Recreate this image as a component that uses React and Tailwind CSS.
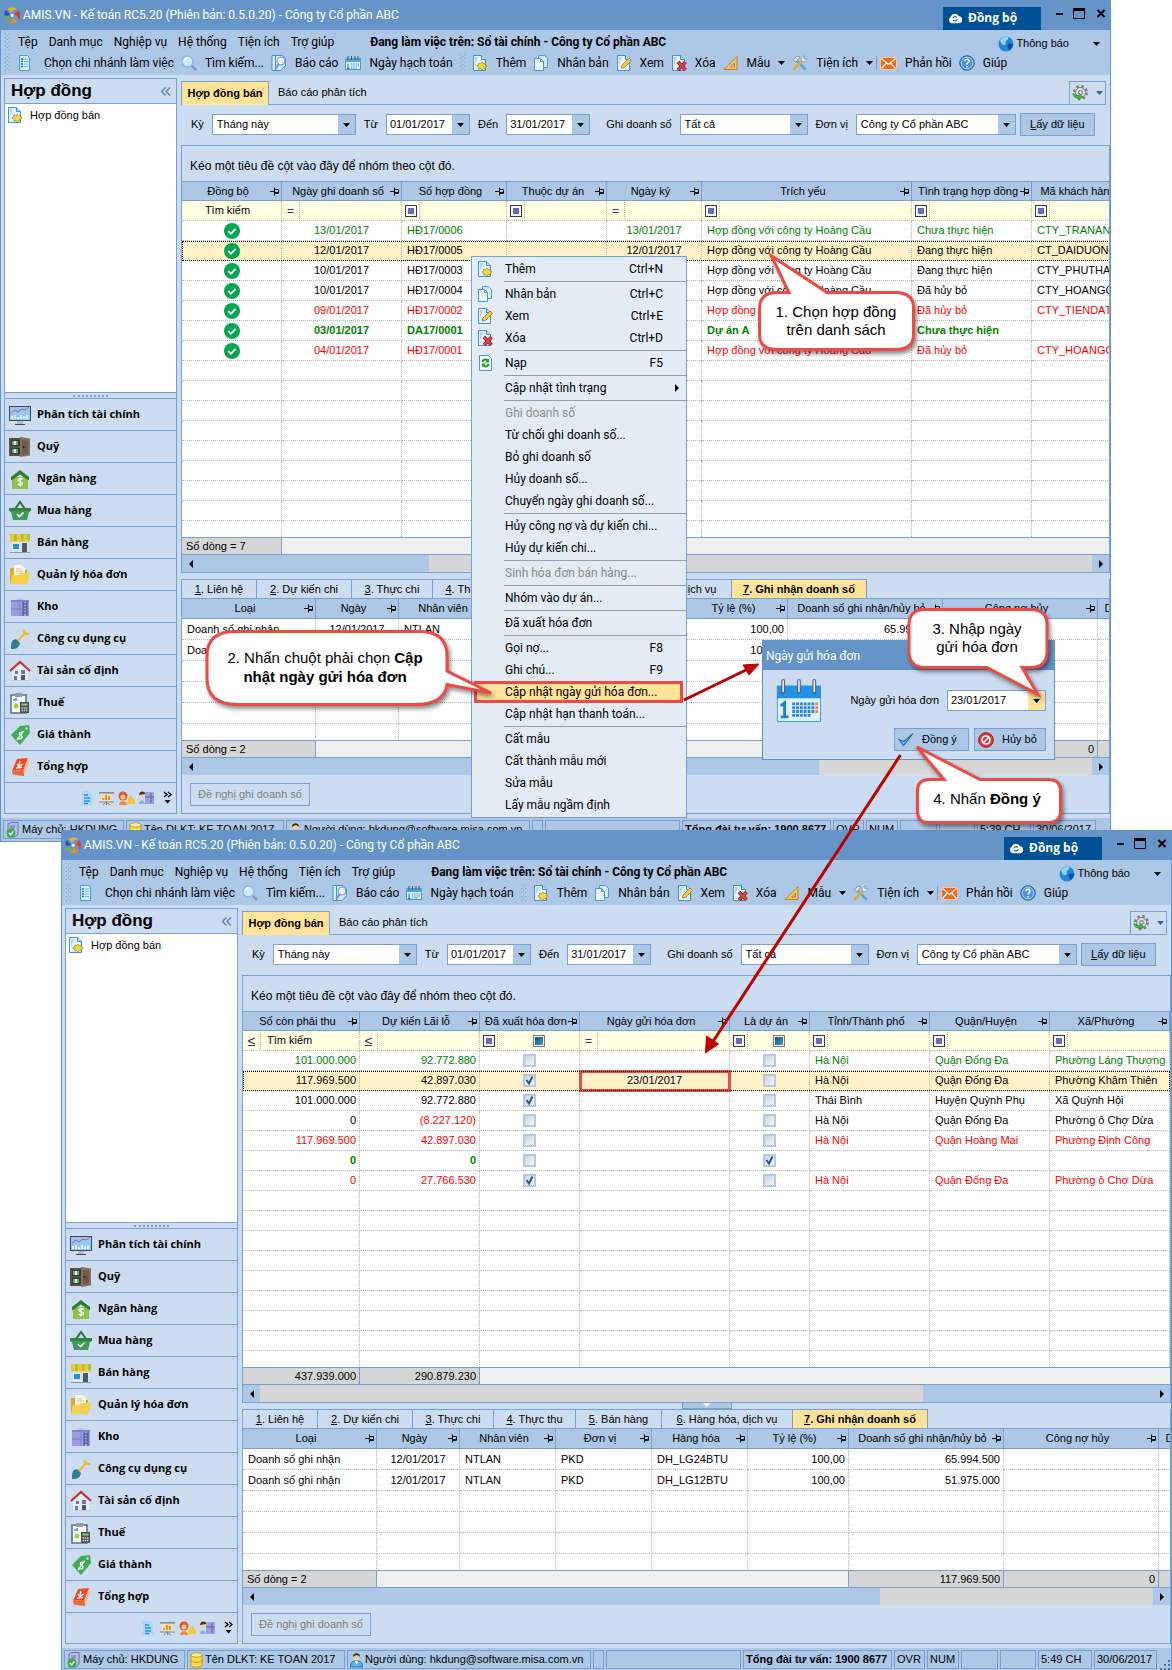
import clsx from 'clsx';

/* ── Small glyphs ── */

const Caret = ({ className = 'text-black' }) => (
  <svg width="7" height="4" viewBox="0 0 7 4" className={clsx('shrink-0', className)} aria-hidden="true">
    <path d="M0 0h7L3.5 4z" fill="currentColor" />
  </svg>
);

const Pin = () => (
  <svg width="10" height="9" viewBox="0 0 10 9" className="shrink-0" aria-hidden="true">
    <path d="M0 4.5h4M4.5 0.5v8M4.5 2.5h4v4h-4M4.5 5.5h4" fill="none" stroke="#111" />
  </svg>
);

const Grip = ({ className }) => (
  <svg width="5" height="18" viewBox="0 0 5 18" className={clsx('shrink-0', className)} aria-hidden="true">
    {[0, 4, 8, 12, 16].map((y) => (
      <g key={y} fill="#8ba6c8">
        <rect x="0" y={y} width="1" height="1" />
        <rect x="4" y={y} width="1" height="1" />
        <rect x="2" y={y + 2} width="1" height="1" />
      </g>
    ))}
  </svg>
);

const SyncedMark = () => (
  <svg width="16" height="16" viewBox="0 0 16 16" className="mx-auto block" role="img" aria-label="Đã đồng bộ">
    <circle cx="8" cy="8" r="8" fill="#04a651" />
    <path d="M4.3 8.2l2.6 2.6 4.8-5" fill="none" stroke="#fff" strokeWidth="1.8" />
  </svg>
);

/* ── Toolbar icons ── */

const Page = ({ children }) => (
  <svg width="16" height="16" viewBox="0 0 16 16" className="shrink-0" aria-hidden="true">
    <path d="M1.500 .5h8l4 4v11h-12z" fill="#e6f4ff" stroke="#3f93d0" />
    <path d="M3 2h3L3 10z" fill="#a9d6f7" />
    <path d="M9.500 .5v4h4" fill="#b7dcf8" stroke="#3f93d0" />
    {children}
  </svg>
);

const icons = {
  branch: (
    <svg width="16" height="16" viewBox="0 0 16 16" className="shrink-0" aria-hidden="true">
      <path d="M2.500 .5h8l2 2v13h-10z" fill="#d7eefc" stroke="#3f9bdc" />
      <path d="M4 4h2M4 6.500h2M4 9h2M4 11.500h2" stroke="#1d6fb5" strokeWidth="1.500" />
      <path d="M7 4h4M7 6.500h4M7 9h4M7 11.500h4" stroke="#6db7e6" />
    </svg>
  ),
  search: (
    <svg width="16" height="16" viewBox="0 0 16 16" className="shrink-0" aria-hidden="true">
      <path d="M10 10l4.500 4.500" stroke="#9a8fc9" strokeWidth="2.500" strokeLinecap="round" />
      <circle cx="6.500" cy="6.500" r="5.500" fill="#cfeafc" stroke="#86bfe6" strokeWidth="1.500" />
      <path d="M3.500 5.500a3 3 0 0 1 3-2.500" fill="none" stroke="#fff" strokeWidth="1.500" />
    </svg>
  ),
  report: (
    <svg width="16" height="16" viewBox="0 0 16 16" className="shrink-0" aria-hidden="true">
      <path d="M1 .5h10l3.500 3v7L10 15.500H1z" fill="#d5ecfc" stroke="#3f93d0" />
      <path d="M4.500 1v14" stroke="#3f93d0" />
      <circle cx="10" cy="6" r="3.800" fill="#eff9ff" stroke="#7aa9d4" strokeWidth="1.300" />
      <path d="M7.800 9L4.500 14" stroke="#8e83c4" strokeWidth="2" />
    </svg>
  ),
  calendar: (
    <svg width="16" height="16" viewBox="0 0 16 16" className="shrink-0" aria-hidden="true">
      <path d="M.5 3.500h15v11H.5z" fill="#e8f5ff" stroke="#3f9bdc" />
      <path d="M0 3h16v4H0z" fill="#4aa6e8" />
      <path d="M3 1v4M6.500 1v4M10 1v4M13 1v4" stroke="#555" />
      <path d="M6 9h8M6 11h8M6 13h6" stroke="#3f8dcc" strokeDasharray="1.500 .7" />
      <path d="M3 8.500v5M2 13.500h2.500" stroke="#1c6cb4" />
    </svg>
  ),
  add: (
    <Page>
      <path d="M10 7l1.200 1.600 2-.6v2l2 1-2 1.200v2l-2-.6L10 15l-1.200-1.400-2 .6v-2l-2-1.200 2-1v-2l2 .6z" fill="#ecd84a" stroke="#a08a14" strokeWidth=".7" />
    </Page>
  ),
  copy: (
    <svg width="16" height="16" viewBox="0 0 16 16" className="shrink-0" aria-hidden="true">
      <path d="M5.500 .5h6l3 3v9h-9z" fill="#d5edfc" stroke="#4c9ad2" />
      <path d="M1.500 3.500h6l3 3v9h-9z" fill="#eaf6ff" stroke="#4c9ad2" />
      <path d="M7.500 3.500v3h3" fill="none" stroke="#4c9ad2" />
    </svg>
  ),
  view: (
    <Page>
      <path d="M5 13l1-3 7-7 2.500 2.500-7 7z" fill="#f3c54b" stroke="#a67a1a" strokeWidth=".8" />
    </Page>
  ),
  remove: (
    <Page>
      <path d="M7 7l7.500 8M14.500 7L7 15" stroke="#8f1d1d" strokeWidth="3.600" />
      <path d="M7 7l7.500 8M14.500 7L7 15" stroke="#e04343" strokeWidth="2.200" />
    </Page>
  ),
  reload: (
    <svg width="16" height="16" viewBox="0 0 16 16" className="shrink-0" aria-hidden="true">
      <path d="M2.500 .5h9l3 3v12h-12z" fill="#f2f8ff" stroke="#5b8fc7" />
      <path d="M5.500 7c.5-3 4-3 5-1.500M11.500 9c-.5 3-4 3-5 1.500" fill="none" stroke="#16a016" strokeWidth="2" />
      <path d="M12 3.500v4H8zM5 12.500v-4h4z" fill="#16a016" />
    </svg>
  ),
  ruler: (
    <svg width="16" height="16" viewBox="0 0 16 16" className="shrink-0" aria-hidden="true">
      <path d="M14 1.500v13H1z" fill="#f4c363" stroke="#b9822a" />
      <path d="M11.500 8v4H7.500z" fill="#adc7e7" stroke="#b9822a" />
    </svg>
  ),
  tools: (
    <svg width="16" height="16" viewBox="0 0 16 16" className="shrink-0" aria-hidden="true">
      <path d="M4 5l9 9" stroke="#5aa7df" strokeWidth="2.500" strokeLinecap="round" />
      <path d="M2 14l8-8" stroke="#e3a740" strokeWidth="2.500" strokeLinecap="round" />
      <path d="M1 5l4-4 3 1-4 5z" fill="#dcdcdc" stroke="#888" strokeWidth=".8" />
      <path d="M9.500 6c-1-3 1-5 3.500-5l-1.500 2 1.500 1.500L15 3c.5 2.500-2 5-5.500 3z" fill="#e8eef5" stroke="#6f94bb" strokeWidth=".8" />
    </svg>
  ),
  mail: (
    <svg width="17" height="16" viewBox="0 0 17 16" className="shrink-0" aria-hidden="true">
      <path d="M.5 2.500h16v12H.5z" fill="#f26a1b" stroke="#f9c8a2" />
      <path d="M1.500 3.500l7 6 7-6M1.500 13.500l5-5.500M15.500 13.500l-5-5.500" fill="none" stroke="#fff" strokeWidth="1.200" />
    </svg>
  ),
  help: (
    <svg width="16" height="16" viewBox="0 0 16 16" className="shrink-0" aria-hidden="true">
      <circle cx="8" cy="8" r="7.300" fill="#4d94e0" stroke="#2c66ad" />
      <circle cx="8" cy="8" r="5.800" fill="none" stroke="#a9cff5" />
      <path d="M6 6.300c0-2.600 4-2.600 4 0 0 1.500-2 1.500-2 3.200M8 11v1.500" fill="none" stroke="#fff" strokeWidth="1.500" />
    </svg>
  ),
  globe: (
    <svg width="16" height="16" viewBox="0 0 16 16" className="shrink-0" aria-hidden="true">
      <circle cx="8" cy="8" r="7.500" fill="#1f84dc" />
      <path d="M2 4c2-3 6-4 8-3 1 2-1 3-2 4s1 3-1 4-4-1-5-5z" fill="#8fd3ff" />
      <path d="M10 8c2-1 4 0 5 0-.5 3-2 5-4 6-1-2-2-4-1-6z" fill="#0a4c9e" />
    </svg>
  ),
  gear: (
    <svg width="16" height="16" viewBox="0 0 16 16" className="shrink-0" aria-hidden="true">
      <circle cx="8.500" cy="7.500" r="6" fill="none" stroke="#7d7d7d" strokeWidth="3" strokeDasharray="2.400 2.310" />
      <circle cx="8.500" cy="7.500" r="5" fill="#d9d9d9" stroke="#7d7d7d" />
      <circle cx="8.500" cy="7.500" r="2" fill="#ccdcf1" stroke="#777" />
      <path d="M1 8c0 4 3 5.500 6 5v2.500l3.500-4L7 8.500v2c-2 .3-4-.3-6-2.500z" fill="#3fbf3b" stroke="#1f8a22" strokeWidth=".6" />
    </svg>
  ),
  logo: (
    <svg width="16" height="16" viewBox="0 0 16 16" className="shrink-0" aria-hidden="true">
      <path d="M3 2.200A8 8 0 0 1 13.500 2.500C10 2 7.500 3.500 7 6.500 6.300 4 5 2.500 3 2.200z" fill="#f3b01f" />
      <path d="M14 3a8 8 0 0 1 .5 10c0-3-1.500-5-4.700-6C12 6.300 13.500 5 14 3z" fill="#e23b1e" />
      <path d="M14 13.700A8 8 0 0 1 4 15c3-.3 5-2.300 5-5.300 1 2.300 2.500 3.800 5 4z" fill="#f08a1c" />
      <path d="M3.300 14.500A8 8 0 0 1 0 8.500c1.500 2.300 4 3 6.700 1.700-1 1.800-1.700 3-3.400 4.300z" fill="#6cb52d" />
      <path d="M0 7.500a8 8 0 0 1 2.300-4.700C3.500 4.500 4.300 6.500 6.500 8 4 9.300 1.500 9 0 7.500z" fill="#2a55b8" />
      <circle cx="8.200" cy="8.200" r="1.500" fill="#fff" />
    </svg>
  ),
  server: (
    <svg width="14" height="16" viewBox="0 0 14 16" className="shrink-0" aria-hidden="true">
      <path d="M2 2l3-1.500h7v12l-3 2.500H2z" fill="#b9bde6" stroke="#6a6fae" />
      <path d="M4 4h5M4 6h5" stroke="#6a6fae" />
      <circle cx="5" cy="11" r="4.500" fill="#3fae49" />
      <path d="M2.800 11l1.800 1.800 2.800-3.300" fill="none" stroke="#fff" strokeWidth="1.400" />
    </svg>
  ),
  database: (
    <svg width="13" height="16" viewBox="0 0 13 16" className="shrink-0" aria-hidden="true">
      <path d="M1 3v10c0 3 11 3 11 0V3z" fill="#fbd94c" stroke="#c9971a" />
      <ellipse cx="6.500" cy="3" rx="5.500" ry="2.200" fill="#fff2a8" stroke="#c9971a" />
      <path d="M1 8c0 3 11 3 11 0" fill="none" stroke="#c9971a" />
    </svg>
  ),
  user: (
    <svg width="13" height="16" viewBox="0 0 13 16" className="shrink-0" aria-hidden="true">
      <path d="M.5 15c0-5 2-6 6-6s6 1 6 6z" fill="#58b2ea" stroke="#2b78b6" />
      <path d="M5 9l1.500 4L8 9z" fill="#fff" />
      <circle cx="6.500" cy="5" r="3.200" fill="#f6cd9b" />
      <path d="M3 5c-.5-5 7.500-5 7 0-2-2-4-2.500-7 0z" fill="#3a2c20" />
    </svg>
  ),
};

/* ── Module icons of the side bar ── */

const ModuleIcon = ({ children }) => (
  <svg width="22" height="22" viewBox="0 0 22 22" className="shrink-0" aria-hidden="true">{children}</svg>
);

const modules = [
  { label: 'Phân tích tài chính', art: (
    <>
      <rect x="0" y="2" width="22" height="15" fill="#3c4a66" />
      <rect x="1" y="3" width="20" height="13" fill="#8fcaf8" />
      <path d="M2 9l4-3 3 2 4-3 3 1 4-3" fill="none" stroke="#e2504a" />
      <path d="M3 15v-3M6 15v-4M9 15v-2M12 15v-4M15 15v-3M18 15v-4" stroke="#fff" strokeWidth="1.500" />
      <path d="M8 17h6v3H8z" fill="#b7bcc6" /><path d="M6 20h10v1H6z" fill="#3c4a66" />
    </>
  ) },
  { label: 'Quỹ', art: (
    <>
      <path d="M0 2h13v18H0z" fill="#5f4d43" /><path d="M2 4h9v6H2zM2 12h9v6H2z" fill="#2f3b35" />
      <path d="M3 5h6v4H3zM3 13h6v4H3z" fill="#5fae72" /><path d="M5 5h2v4H5zM5 13h2v4H5z" fill="#e6f4e3" />
      <path d="M11 1l10 1.500v17L11 21z" fill="#86705f" /><path d="M13 4l6 .8v13l-6 1z" fill="#6f594c" />
      <circle cx="14.500" cy="11" r="1" fill="#2e231d" />
    </>
  ) },
  { label: 'Ngân hàng', art: (
    <>
      <path d="M3 9h16v12H3z" fill="#8bc34a" /><path d="M11 2L2 9v3.500l9-6 9 6V9z" fill="#2f7d32" />
      <path d="M13.500 11.500c-1-1.500-4.500-1.300-4.500.7 0 2.200 4.500 1 4.500 3.300 0 2-3.800 2-4.800.3M11.200 9.500v9" fill="none" stroke="#fff" strokeWidth="1.300" />
    </>
  ) },
  { label: 'Mua hàng', art: (
    <>
      <path d="M6 9l5-7 5 7" fill="none" stroke="#2c6f38" strokeWidth="2" />
      <path d="M1 8h20v4h-1l-2 8H4l-2-8H1z" fill="#3f9c52" /><path d="M0 8h22v3H0z" fill="#2f8544" />
      <path d="M8 14l2.500 2.500 4-4" fill="none" stroke="#fff" strokeWidth="1.600" />
    </>
  ) },
  { label: 'Bán hàng', art: (
    <>
      <path d="M2 9h18v11H2z" fill="#dfe5ea" />
      <path d="M1 2h20v6a2 2 0 0 1-4 0 2 2 0 0 1-4 0 2 2 0 0 1-4 0 2 2 0 0 1-4 0 2 2 0 0 1-4 0z" fill="#f6c332" />
      <path d="M5 2h3v7H5zM12 2h2.500v7H12zM18 2h3v6h-3z" fill="#9cc93c" />
      <path d="M4 12h6v5H4z" fill="#2293e0" /><path d="M13 11h5v9h-5z" fill="#4b5b68" /><path d="M1 20h20v1H1z" fill="#8d99a5" />
    </>
  ) },
  { label: 'Quản lý hóa đơn', art: (
    <>
      <path d="M1 4h7l2 2h8v14H1z" fill="#d9ab2b" /><path d="M5 1h8l3 3v9H5z" fill="#fbf6e6" />
      <path d="M7 5h5M7 7h7" stroke="#c9c0a4" /><path d="M3 11h6l2-2h10l-2.500 11H1z" fill="#f7cf4d" />
    </>
  ) },
  { label: 'Kho', art: (
    <>
      <path d="M2 4h18v16H2z" fill="#9b9fe0" /><path d="M7 4l4-2 4 2z" fill="#b9bceb" /><path d="M2 4h18v2H2z" fill="#8084cc" />
      <path d="M2 13h10M11 6v14" stroke="#7f83cc" /><path d="M14 6v14M18 6v14M14 8h4M14 11h4M14 14h4M14 17h4" stroke="#454a7c" />
    </>
  ) },
  { label: 'Công cụ dụng cụ', art: (
    <>
      <path d="M8 14l9-10" stroke="#f2b92e" strokeWidth="2" /><path d="M14.500 1.500l.5 4 5 .5" fill="none" stroke="#f2b92e" strokeWidth="2" />
      <path d="M4 12l3-1 4 4-1 3c-2 3-5 3-8 3 0-4 0-7 2-9z" fill="#2f7f97" />
    </>
  ) },
  { label: 'Tài sản cố định', art: (
    <>
      <path d="M3 9l8-6 8 6v11H3z" fill="#e8ebf3" /><path d="M1 11L11 2l10 9" fill="none" stroke="#c2352f" strokeWidth="2.200" />
      <path d="M6 11h3v3H6zM12 10h4v4h-4zM5 16h3v4H5z" fill="#6a77a8" /><path d="M12 15h4v5h-4z" fill="#4a5686" /><path d="M1 20h20v1H1z" fill="#c6cada" />
    </>
  ) },
  { label: 'Thuế', art: (
    <>
      <path d="M2 3h15v18H2z" fill="#fff" stroke="#5c7382" strokeWidth="1.600" /><path d="M6 1h7v4H6z" fill="#8ba0ad" />
      <path d="M5 9V7M7 9V6" stroke="#2293e0" strokeWidth="1.500" /><circle cx="7" cy="14" r="2.500" fill="#a7cf3a" />
      <path d="M11 10h9v11h-9z" fill="#4c4f57" /><path d="M12.500 11.500h6v2h-6z" fill="#8fd06a" />
      <path d="M12.500 16h6M12.500 18.500h6" stroke="#d9dbe0" strokeDasharray="1.500 .7" strokeWidth="1.500" />
    </>
  ) },
  { label: 'Giá thành', art: (
    <>
      <path d="M2 11L11 2l9-1 1 8-10 12z" fill="#3fae57" /><circle cx="17.500" cy="4.500" r="1.300" fill="#ccdcf1" />
      <path d="M14 9c-2-2-4.500 0-3.500 1.500s3 1 2.500 3-3.500 1.500-4.500 0M14.500 7l-6.500 9" fill="none" stroke="#fff" strokeWidth="1.300" />
    </>
  ) },
  { label: 'Tổng hợp', art: (
    <>
      <path d="M8 3l11-1-4.500 12L3 15z" fill="#f04a2a" /><path d="M3 15l11.500-1L19 2l1 4-5 14-11-1z" fill="#f5c28e" />
      <path d="M3 15l11.500-1 .5 6-11-1.500z" fill="#e8683f" /><path d="M11 5l-1 4M8 8l2 2.500L13.500 8M7 12l6-.6" stroke="#fff" strokeWidth="1.300" fill="none" />
    </>
  ) },
];

/* ── Form parts ── */

const Picker = ({ id, label, value, className }) => (
  <>
    <label htmlFor={id} className="whitespace-nowrap">{label}</label>
    <div className={clsx('relative flex h-[21px] border border-[#79a0d0] bg-white', className)}>
      <select id={id} defaultValue={value} className="min-w-0 flex-1 appearance-none bg-white pl-1 pr-[20px] outline-none">
        <option>{value}</option>
      </select>
      <span className="pointer-events-none absolute inset-y-0 right-0 flex w-[17px] items-center justify-center bg-[#adc7e7]"><Caret /></span>
    </div>
  </>
);

const DateBox = ({ id, label, value, className, active }) => (
  <>
    <label htmlFor={id} className="whitespace-nowrap">{label}</label>
    <div className={clsx('flex h-[21px] border border-[#79a0d0] bg-white', className)}>
      <input id={id} type="text" defaultValue={value} className="min-w-0 flex-1 pl-[3px] outline-none" />
      <button type="button" aria-label="Chọn ngày" className={clsx('flex w-[17px] items-center justify-center', active ? 'bg-[#ffe399]' : 'bg-[#adc7e7]')}><Caret /></button>
    </div>
  </>
);

const Tick = ({ checked, label }) => (
  <span className="relative mx-auto block size-[13px]">
    <input type="checkbox" aria-label={label} defaultChecked={checked} className="peer block size-[13px] appearance-none border-2 border-[#b3c9e4] bg-linear-to-br from-[#cfd4da] to-[#f6f6f6]" />
    <svg viewBox="0 0 13 13" className="pointer-events-none absolute inset-0 hidden peer-checked:block" aria-hidden="true">
      <path d="M3.500 6l2.500 3.500L9.500 2.500" fill="none" stroke="#2f5596" strokeWidth="2" />
    </svg>
  </span>
);

const ScrollBar = ({ thumb }) => (
  <div className="flex h-[17px] items-stretch bg-[#adc7e7]">
    <button type="button" aria-label="Cuộn trái" className="flex w-[17px] items-center justify-center">
      <svg width="4" height="8" viewBox="0 0 4 8" aria-hidden="true"><path d="M4 0v8L0 4z" /></svg>
    </button>
    <div className="flex flex-1">
      <div className={clsx('bg-[#d6d6d6]', thumb)} />
    </div>
    <button type="button" aria-label="Cuộn phải" className="flex w-[17px] items-center justify-center">
      <svg width="4" height="8" viewBox="0 0 4 8" aria-hidden="true"><path d="M0 0v8l4-4z" /></svg>
    </button>
  </div>
);

/* ── Data grid ── */

const Operator = ({ kind }) => {
  if (!kind) return null;
  return (
    <span className="flex h-[17px] w-[18px] shrink-0 items-center justify-center border-r border-dotted border-[#b0b0b0] text-[#33336b]">
      {kind === 'box' && (
        <span className="flex size-[12px] items-center justify-center border border-[#33336b] bg-white"><span className="size-[6px] bg-[#6666cc]" /></span>
      )}
      {kind === 'eq' && <span className="text-xs">=</span>}
      {kind === 'le' && <span className="text-sm leading-4">≤</span>}
    </span>
  );
};

const ALIGN = { left: 'text-left pl-[5px]', center: 'text-center', right: 'text-right pr-[3px]' };
const TONE = { green: 'text-[#008000]', red: 'text-[#ff0000]', black: 'text-black', total: 'text-[#008000] font-bold' };

const Grid = ({ cols, rows, blanks, filter, rowClass, className, marked }) => (
  <div className={clsx('overflow-hidden bg-white', className)}>
    <table className="table-fixed border-separate border-spacing-0" style={{ width: cols.reduce((n, c) => n + c.width, 0) }}>
      <colgroup>{cols.map((c) => <col key={c.name} style={{ width: c.width }} />)}</colgroup>
      <thead>
        <tr className={rowClass}>
          {cols.map((c) => (
            <th key={c.name} scope="col" className="border-y border-r border-[#79a0d0] bg-[#adc7e7] p-0 font-normal">
              <div className="flex items-center overflow-hidden pl-1 pr-px">
                <span className="flex-1 whitespace-nowrap text-center">{c.name}</span>
                <Pin />
              </div>
            </th>
          ))}
        </tr>
      </thead>
      <tbody>
        {filter && (
          <tr className="h-[20px] bg-[#ffffe1]">
            {cols.map((c) => (
              <td key={c.name} className="border-b border-r border-dotted border-[#b8b8b8] p-0">
                <div className="flex h-[19px] items-center">
                  <Operator kind={c.op} />
                  {c.search && <span className={c.op ? 'pl-[6px]' : 'flex-1 pr-2 text-center'}>Tìm kiếm</span>}
                  {c.tri && <span className="mx-auto flex size-[12px] border border-[#777] bg-white p-px"><span className="flex-1 bg-linear-to-br from-[#0c4e86] to-[#39a3d4]" /></span>}
                </div>
              </td>
            ))}
          </tr>
        )}
        {rows.map((row, i) => (
          <tr key={i} className={clsx(rowClass, TONE[row.tone], row.selected && 'bg-[#fff1c8] outline-1 -outline-offset-1 outline-dotted outline-black')}>
            {cols.map((c, j) => {
              const value = row.cells[j];
              return (
                <td
                  key={c.name}
                  className={clsx(
                    'overflow-hidden whitespace-nowrap border-b border-r border-dotted border-[#b8b8b8] p-0',
                    ALIGN[c.align],
                    String(value).startsWith('(') && 'text-[#ff0000]',
                    marked && row.selected && j === marked && 'outline-3 -outline-offset-2 outline-[#ec4a43]'
                  )}
                >
                  {c.kind === 'sync' ? <SyncedMark /> : c.kind === 'tick' ? <Tick checked={value} label={c.name} /> : value}
                </td>
              );
            })}
          </tr>
        ))}
        {Array.from({ length: blanks }, (_, i) => (
          <tr key={`b${i}`} className={rowClass}>
            {cols.map((c) => <td key={c.name} className="border-b border-r border-dotted border-[#b8b8b8] p-0" />)}
          </tr>
        ))}
      </tbody>
    </table>
  </div>
);

const Summary = ({ cells }) => (
  <div className="flex h-[18px] overflow-hidden border-y border-[#79a0d0] bg-[#efefef] leading-4">
    {cells.map((c, i) => (
      <div
        key={i}
        className={clsx('shrink-0 border-r border-[#79a0d0]', c.text && 'bg-[#d6d6d6]', c.right ? 'pr-[3px] text-right' : 'pl-1')}
        style={{ width: c.width }}
      >
        {c.text}
      </div>
    ))}
  </div>
);

/* ── Data ── */

const HC = 'Hợp đồng với công ty Hoàng Cầu';

const contracts = {
  cols: [
    { name: 'Đồng bộ', width: 100, align: 'center', kind: 'sync', search: true },
    { name: 'Ngày ghi doanh số', width: 120, align: 'center', op: 'eq' },
    { name: 'Số hợp đồng', width: 105, align: 'left', op: 'box' },
    { name: 'Thuộc dự án', width: 100, align: 'left', op: 'box' },
    { name: 'Ngày ký', width: 95, align: 'center', op: 'eq' },
    { name: 'Trích yếu', width: 210, align: 'left', op: 'box' },
    { name: 'Tình trạng hợp đồng', width: 120, align: 'left', op: 'box' },
    { name: 'Mã khách hàng', width: 100, align: 'left', op: 'box' },
  ],
  rows: [
    { tone: 'green', cells: [1, '13/01/2017', 'HĐ17/0006', '', '13/01/2017', HC, 'Chưa thực hiện', 'CTY_TRANANH'] },
    { tone: 'black', selected: true, cells: [1, '12/01/2017', 'HĐ17/0005', '', '12/01/2017', HC, 'Đang thực hiện', 'CT_DAIDUONG'] },
    { tone: 'black', cells: [1, '10/01/2017', 'HĐ17/0003', '', '', HC, 'Đang thực hiện', 'CTY_PHUTHAI'] },
    { tone: 'black', cells: [1, '10/01/2017', 'HĐ17/0004', '', '', HC, 'Đã hủy bỏ', 'CTY_HOANGCAU'] },
    { tone: 'red', cells: [1, '09/01/2017', 'HĐ17/0002', '', '', HC, 'Đã hủy bỏ', 'CTY_TIENDAT'] },
    { tone: 'total', cells: [1, '03/01/2017', 'DA17/0001', '', '', 'Dự án A', 'Chưa thực hiện', ''] },
    { tone: 'red', cells: [1, '04/01/2017', 'HĐ17/0001', '', '', HC, 'Đã hủy bỏ', 'CTY_HOANGCAU'] },
  ],
  summary: [{ width: 100, text: 'Số dòng = 7' }],
  thumb: 'ml-[230px] flex-1',
};

const invoices = {
  cols: [
    { name: 'Số còn phải thu', width: 117, align: 'right', op: 'le', search: true },
    { name: 'Dự kiến Lãi lỗ', width: 120, align: 'right', op: 'le' },
    { name: 'Đã xuất hóa đơn', width: 100, align: 'center', kind: 'tick', op: 'box', tri: true },
    { name: 'Ngày gửi hóa đơn', width: 150, align: 'center', op: 'eq' },
    { name: 'Là dự án', width: 80, align: 'center', kind: 'tick', op: 'box', tri: true },
    { name: 'Tỉnh/Thành phố', width: 120, align: 'left', op: 'box' },
    { name: 'Quận/Huyện', width: 120, align: 'left', op: 'box' },
    { name: 'Xã/Phường', width: 120, align: 'left', op: 'box' },
  ],
  rows: [
    { tone: 'green', cells: ['101.000.000', '92.772.880', false, '', false, 'Hà Nội', 'Quận Đống Đa', 'Phường Láng Thượng'] },
    { tone: 'black', selected: true, cells: ['117.969.500', '42.897.030', true, '23/01/2017', false, 'Hà Nội', 'Quận Đống Đa', 'Phường Khâm Thiên'] },
    { tone: 'black', cells: ['101.000.000', '92.772.880', true, '', false, 'Thái Bình', 'Huyện Quỳnh Phụ', 'Xã Quỳnh Hội'] },
    { tone: 'black', cells: ['0', '(8.227.120)', false, '', false, 'Hà Nội', 'Quận Đống Đa', 'Phường ô Chợ Dừa'] },
    { tone: 'red', cells: ['117.969.500', '42.897.030', false, '', false, 'Hà Nội', 'Quận Hoàng Mai', 'Phường Định Công'] },
    { tone: 'total', cells: ['0', '0', false, '', true, '', '', ''] },
    { tone: 'red', cells: ['0', '27.766.530', true, '', false, 'Hà Nội', 'Quận Đống Đa', 'Phường ô Chợ Dừa'] },
  ],
  summary: [
    { width: 117, text: '437.939.000', right: true },
    { width: 120, text: '290.879.230', right: true },
  ],
  thumb: 'mr-[230px] flex-1',
};

const detail = {
  cols: [
    { name: 'Loại', width: 134, align: 'left' },
    { name: 'Ngày', width: 83, align: 'center' },
    { name: 'Nhân viên', width: 96, align: 'left' },
    { name: 'Đơn vị', width: 96, align: 'left' },
    { name: 'Hàng hóa', width: 96, align: 'left' },
    { name: 'Tỷ lệ (%)', width: 101, align: 'right' },
    { name: 'Doanh số ghi nhận/hủy bỏ', width: 155, align: 'right' },
    { name: 'Công nợ hủy', width: 155, align: 'right' },
    { name: 'Diễn giải', width: 64, align: 'left' },
  ],
  rows: [
    { tone: 'black', cells: ['Doanh số ghi nhận', '12/01/2017', 'NTLAN', 'PKD', 'DH_LG24BTU', '100,00', '65.994.500', '', ''] },
    { tone: 'black', cells: ['Doanh số ghi nhận', '12/01/2017', 'NTLAN', 'PKD', 'DH_LG12BTU', '100,00', '51.975.000', '', ''] },
  ],
  summary: [
    { width: 134, text: 'Số dòng = 2' },
    { width: 472 },
    { width: 155, text: '117.969.500', right: true },
    { width: 155, text: '0', right: true },
    { width: 80, text: ' ' },
  ],
};

const detailTabs = [
  ['Liên hệ', 'w-[75px]'],
  ['Dự kiến chi', 'w-[95px]'],
  ['Thực chi', 'w-[81px]'],
  ['Thực thu', 'w-[82px]'],
  ['Bán hàng', 'w-[86px]'],
  ['Hàng hóa, dịch vụ', 'w-[131px]'],
  ['Ghi nhận doanh số', 'w-[135px]'],
];

/* ── Window chrome ── */

const TitleBar = () => (
  <header className="flex h-[30px] items-center bg-[#6595c8] pl-[3px] text-white">
    {icons.logo}
    <span className="ml-[3px] font-['Roboto'] text-xs">AMIS.VN - Kế toán RC5.20 (Phiên bản: 0.5.0.20) - Công ty Cổ phần ABC</span>
    <button type="button" className="ml-auto mt-[6px] flex h-[23px] w-[98px] items-center gap-[6px] bg-[#005096] pl-[5px] font-['Open_Sans'] text-xs font-bold">
      <svg width="14" height="12" viewBox="0 0 16 12" aria-hidden="true">
        <path d="M4 12a4 4 0 0 1-.8-7.400A5 5 0 0 1 12.500 4 4 4 0 0 1 12 12z" fill="#fff" />
        <path d="M5.500 6.500a2.500 2.500 0 0 1 4.500-1M10.500 7a2.500 2.500 0 0 1-4.500 1.500" fill="none" stroke="#005096" strokeWidth="1.200" />
      </svg>
      Đồng bộ
    </button>
    <div className="ml-[14px] mr-1 flex items-center gap-[9px] self-start pt-[8px] text-black">
      <button type="button" aria-label="Thu nhỏ"><svg width="9" height="11" viewBox="0 0 9 11"><path d="M1 6h7" stroke="#000" strokeWidth="2" /></svg></button>
      <button type="button" aria-label="Phóng to"><svg width="12" height="11" viewBox="0 0 12 11"><path d="M.5 1h11v9.500H.5z" fill="none" stroke="#000" /><path d="M0 0h12v3H0z" /></svg></button>
      <button type="button" aria-label="Đóng" className="ml-[2px]"><svg width="10" height="11" viewBox="0 0 10 11"><path d="M1.500 2l7 7M8.500 2l-7 7" stroke="#000" strokeWidth="2" /></svg></button>
    </div>
  </header>
);

const Tool = ({ icon, children, drop }) => (
  <button type="button" className="flex shrink-0 items-center gap-2 whitespace-nowrap">
    {icons[icon]}
    {children}
    {drop && <Caret />}
  </button>
);

const MenuBars = () => (
  <div className="h-[45px] bg-[#adc7e7] font-['Roboto'] text-xs">
    <nav className="flex h-[23px] items-center pl-1">
      <Grip />
      <div className="ml-2 flex gap-[11px] whitespace-nowrap">
        {['Tệp', 'Danh mục', 'Nghiệp vụ', 'Hệ thống', 'Tiện ích', 'Trợ giúp'].map((m) => <button key={m} type="button">{m}</button>)}
      </div>
      <strong className="ml-9 whitespace-nowrap">Đang làm việc trên: Sổ tài chính - Công ty Cổ phần ABC</strong>
      <button type="button" className="ml-auto mr-[10px] mt-1 flex items-center whitespace-nowrap font-['Liberation_Sans']">
        {icons.globe}
        <span className="ml-[2px] mr-6 text-[11px]">Thông báo</span>
        <Caret />
      </button>
    </nav>
    <div className="flex h-[20px] items-center gap-[7px] pl-1">
      <Grip />
      <button type="button" className="flex items-center gap-[11px] whitespace-nowrap">{icons.branch}Chọn chi nhánh làm việc</button>
      <Tool icon="search">Tìm kiếm...</Tool>
      <Tool icon="report">Báo cáo</Tool>
      <Tool icon="calendar">Ngày hạch toán</Tool>
      <Grip />
      <Tool icon="add">Thêm</Tool>
      <Tool icon="copy">Nhân bản</Tool>
      <Tool icon="view">Xem</Tool>
      <Tool icon="remove">Xóa</Tool>
      <Tool icon="ruler" drop>Mẫu</Tool>
      <Tool icon="tools" drop>Tiện ích</Tool>
      <span className="-mx-1 h-[14px] w-px bg-[#79a0d0]" />
      <Tool icon="mail">Phản hồi</Tool>
      <Tool icon="help">Giúp</Tool>
    </div>
  </div>
);

const SideBar = () => (
  <aside className="flex w-[173px] shrink-0 flex-col border border-[#79a0d0]">
    <div className="flex h-[25px] items-center justify-between border-b border-[#79a0d0] pl-[6px] pr-[5px]">
      <h2 className="text-[17px] font-bold">Hợp đồng</h2>
      <svg width="10" height="9" viewBox="0 0 10 9" aria-hidden="true"><path d="M4.500 .5l-4 4 4 4M9 .5l-4 4 4 4" fill="none" stroke="#5a7fb8" strokeWidth="1.300" /></svg>
    </div>
    <div className="flex-1 bg-white pl-[2px] pt-[3px]">
      <a href="#hop-dong-ban" className="flex items-center gap-[7px]">{icons.add}Hợp đồng bán</a>
    </div>
    <div className="flex h-[6px] items-center justify-center border-t border-[#79a0d0]">
      <span className="w-[35px] border-t-2 border-dotted border-[#79a0d0]" />
    </div>
    <ul className="font-['Open_Sans'] font-bold">
      {modules.map((m) => (
        <li key={m.label}>
          <button type="button" className="flex h-[32px] w-full items-center gap-[6px] border-t border-[#79a0d0] pl-1">
            <ModuleIcon>{m.art}</ModuleIcon>
            {m.label}
          </button>
        </li>
      ))}
    </ul>
    <div className="flex h-[31px] items-center justify-end gap-1 border-t border-[#79a0d0] pr-1">
      <svg width="74" height="16" viewBox="0 0 74 16" aria-hidden="true">
        <path d="M1 1h7l3 3v11H1z" fill="#a9d8fb" /><path d="M3 5h4M3 8h6M3 11h6M3 13.500h4" stroke="#2f8fe0" strokeWidth="1.300" />
        <path d="M18 2h15v1.500H18z" fill="#7d8a96" /><path d="M20 4h11v7H20z" fill="#fbe1a3" /><path d="M22 10V8M25 10V5M28 10V6" stroke="#f0931e" strokeWidth="2" /><path d="M18 12h15M25.500 11v4M22 15l3-3 4 3" stroke="#7d8a96" fill="none" />
        <circle cx="42" cy="6" r="4.500" fill="#e4582b" /><circle cx="42" cy="7" r="2.500" fill="#f8cf9f" /><path d="M38 15c0-5 8-5 8 0z" fill="#ef8a36" /><path d="M47 9l3-4 4 6v3h-8z" fill="#f6c332" />
        <circle cx="61" cy="5" r="3" fill="#f8cf9f" /><path d="M58 5c0-5 7-4 6-1z" fill="#4b3524" /><path d="M58 14c0-5 5-5 6 0z" fill="#7fb6e4" /><path d="M64 2h9v12h-9z" fill="#9b9fe0" /><path d="M70 3v10M64 7h9" stroke="#5a5f9c" />
      </svg>
      <svg width="9" height="14" viewBox="0 0 9 14" className="ml-1" aria-hidden="true"><path d="M1 1l3 2.500L1 6M5 1l3 2.500L5 6" fill="none" stroke="#000" strokeWidth="1.300" /><path d="M1.500 9h6l-3 3.500z" /></svg>
    </div>
  </aside>
);

const StatusCell = ({ className, children }) => (
  <div className={clsx('flex h-[19px] shrink-0 items-center gap-[2px] overflow-hidden whitespace-nowrap border border-[#79a0d0] pl-[2px]', className)}>{children}</div>
);

const StatusBar = ({ time }) => (
  <footer className="flex h-[23px] items-center gap-[2px] bg-[#adc7e7] pl-[2px]">
    <StatusCell className="w-[121px]">{icons.server}Máy chủ: HKDUNG</StatusCell>
    <StatusCell className="w-[158px]">{icons.database}Tên DLKT: KE TOAN 2017</StatusCell>
    <StatusCell className="w-[244px]">{icons.user}Người dùng: hkdung@software.misa.com.vn</StatusCell>
    <StatusCell className="w-[11px]" />
    <StatusCell className="min-w-0 flex-1" />
    <StatusCell className="w-[149px] font-bold">Tổng đài tư vấn: 1900 8677</StatusCell>
    <StatusCell className="w-[31px]">OVR</StatusCell>
    <StatusCell className="w-[32px]">NUM</StatusCell>
    <StatusCell className="w-[37px]" />
    <StatusCell className="w-[36px]" />
    <StatusCell className="w-[54px]">{time}</StatusCell>
    <StatusCell className="w-[63px]">30/06/2017</StatusCell>
    <svg width="12" height="12" viewBox="0 0 12 12" className="self-end" aria-hidden="true">
      <path d="M9 1h2v2H9zM5 5h2v2H5zM9 5h2v2H9zM1 9h2v2H1zM5 9h2v2H5zM9 9h2v2H9z" fill="#4d6f9c" />
    </svg>
  </footer>
);

const AppWindow = ({ id, list, time, marked, className }) => (
  <section className={clsx('relative border-x border-b border-[#6595c8] bg-[#ccdcf1]', className)}>
    <TitleBar />
    <MenuBars />
    <div className="flex gap-1 pb-1 pl-[3px] pt-[3px]">
      <SideBar />
      <main className="min-w-0 flex-1 pt-[3px]">
        <div className="flex h-[24px] items-stretch pr-1">
          <button type="button" className="w-[88px] border border-b-0 border-[#79a0d0] bg-[#ffe399] font-bold">Hợp đồng bán</button>
          <button type="button" className="flex-1 border-b border-[#79a0d0] pl-[9px] text-left">Báo cáo phân tích</button>
          <button type="button" aria-label="Tùy chỉnh" className="flex w-[37px] items-center gap-2 border border-[#79a0d0] pl-[2px]">
            {icons.gear}
            <Caret className="text-[#2b5fa8]" />
          </button>
        </div>
        <form className="mt-2 flex h-[23px] items-center gap-2 pl-[10px]">
          <Picker id={`${id}-ky`} label="Kỳ" value="Tháng này" className="w-[144px]" />
          <DateBox id={`${id}-tu`} label="Từ" value="01/01/2017" className="w-[84px]" />
          <DateBox id={`${id}-den`} label="Đến" value="31/01/2017" className="w-[84px]" />
          <span />
          <Picker id={`${id}-ghi`} label="Ghi doanh số" value="Tất cả" className="w-[128px]" />
          <Picker id={`${id}-donvi`} label="Đơn vị" value="Công ty Cổ phần ABC" className="w-[160px]" />
          <button type="button" className="-ml-1 h-[23px] w-[75px] border border-[#79a0d0] bg-[#adc7e7]"><u>L</u>ấy dữ liệu</button>
        </form>
        <div className="mt-[9px] border border-b-0 border-[#79a0d0]">
          <p className="flex h-[35px] items-center pl-2 pt-1 text-xs">Kéo một tiêu đề cột vào đây để nhóm theo cột đó.</p>
          <Grid cols={list.cols} rows={list.rows} blanks={9} filter marked={marked} rowClass="h-[20px]" className="h-[356px]" />
          <Summary cells={list.summary} />
          <ScrollBar thumb={list.thumb} />
        </div>
        <div className="flex h-[7px] justify-center border-t border-[#79a0d0]">
          <span className="flex w-[50px] justify-center border border-t-0 border-[#79a0d0] bg-[#adc7e7]"><Caret className="text-white" /></span>
        </div>
        <div className="border border-t-0 border-[#79a0d0]">
          <div className="flex h-[19px]">
            {detailTabs.map(([name, width], i) => (
              <button
                key={name}
                type="button"
                className={clsx('shrink-0 border-r border-t border-[#79a0d0]', width, i === 6 && 'bg-[#ffe399] font-bold')}
              >
                <u>{i + 1}</u>. {name}
              </button>
            ))}
          </div>
          <Grid cols={detail.cols} rows={detail.rows} blanks={4} rowClass="h-[21px]" className="h-[142px]" />
          <Summary cells={detail.summary} />
          <ScrollBar thumb="ml-[620px] flex-1" />
          <div className="flex h-[38px] items-center pl-2">
            <button type="button" disabled className="h-[23px] w-[120px] border border-[#79a0d0] text-[#808080]">Đề nghị ghi doanh số</button>
          </div>
        </div>
      </main>
    </div>
    <StatusBar time={time} />
  </section>
);

/* ── Context menu of the contract list ── */

const menuGroups = [
  [{ label: 'Thêm', keys: 'Ctrl+N', icon: 'add' }],
  [{ label: 'Nhân bản', keys: 'Ctrl+C', icon: 'copy' }, { label: 'Xem', keys: 'Ctrl+E', icon: 'view' }, { label: 'Xóa', keys: 'Ctrl+D', icon: 'remove' }],
  [{ label: 'Nạp', keys: 'F5', icon: 'reload' }],
  [{ label: 'Cập nhật tình trạng', sub: true }],
  [{ label: 'Ghi doanh số', off: true }, { label: 'Từ chối ghi doanh số...' }, { label: 'Bỏ ghi doanh số' }, { label: 'Hủy doanh số...' }, { label: 'Chuyển ngày ghi doanh số...' }],
  [{ label: 'Hủy công nợ và dự kiến chi...' }, { label: 'Hủy dự kiến chi...' }],
  [{ label: 'Sinh hóa đơn bán hàng...', off: true }],
  [{ label: 'Nhóm vào dự án...' }],
  [{ label: 'Đã xuất hóa đơn' }],
  [{ label: 'Gọi nợ...', keys: 'F8' }, { label: 'Ghi chú...', keys: 'F9' }, { label: 'Cập nhật ngày gửi hóa đơn...', hot: true }, { label: 'Cập nhật hạn thanh toán...' }],
  [{ label: 'Cất mẫu' }, { label: 'Cất thành mẫu mới' }, { label: 'Sửa mẫu' }, { label: 'Lấy mẫu ngầm định' }],
];

const ContextMenu = () => (
  <div role="menu" className="absolute left-[471px] top-[256px] w-[216px] border border-[#79a0d0] bg-[#e3ebf5] py-px font-['Roboto'] text-xs">
    {menuGroups.map((group, g) => (
      <div key={g}>
        {g > 0 && <div className="ml-8 flex h-[3px] items-center"><span className="h-px flex-1 bg-[#9a9fa6]" /></div>}
        {group.map((item) => (
          <div key={item.label} className={clsx(item.hot && 'pl-[2px] pr-[3px]')}>
            <button
              type="button"
              role="menuitem"
              disabled={item.off}
              className={clsx(
                'flex h-[22px] w-full items-center pr-[7px] text-left',
                item.off && 'text-[#8b8b8b]',
                item.hot ? 'bg-[#ffe399] pl-[3px] outline-3 -outline-offset-3 outline-[#ec4a43]' : 'pl-[5px]'
              )}
            >
              <span className="w-[28px]">{item.icon && icons[item.icon]}</span>
              <span className="flex-1">{item.label}</span>
              {item.keys && <span className="pr-4">{item.keys}</span>}
              {item.sub && <svg width="4" height="8" viewBox="0 0 4 8" aria-hidden="true"><path d="M0 0v8l4-4z" /></svg>}
            </button>
          </div>
        ))}
      </div>
    ))}
  </div>
);

const InvoiceDateDialog = () => (
  <div role="dialog" aria-label="Ngày gửi hóa đơn" className="absolute left-[762px] top-[640px] w-[293px] border border-[#6595c8] bg-[#ccdcf1]">
    <div className="flex h-[29px] items-center bg-[#6595c8] pl-[3px] font-['Roboto'] text-xs text-white">Ngày gửi hóa đơn</div>
    <div className="flex items-start px-2 pt-2">
      <svg width="54" height="46" viewBox="0 0 54 48" aria-hidden="true">
        <path d="M5.500 8.500h45v37h-45z" fill="#dff0ff" stroke="#3b9be6" />
        <path d="M5 8h46v13H5z" fill="#2291ea" />
        <path d="M11.500 3v12M28 3v12M44 3v12" stroke="#5c6670" strokeWidth="4" strokeLinecap="round" />
        <path d="M11.500 3v11M28 3v11M44 3v11" stroke="#eef1f3" strokeWidth="1.600" strokeLinecap="round" />
        <path d="M9 29l4-3v14M9 40.500h8" fill="none" stroke="#1f7fd6" strokeWidth="3" />
        <path d="M21 27h23M21 31h23M21 35h23M21 39h19" stroke="#2f86d8" strokeWidth="3" strokeDasharray="3 1" />
        <path d="M45 27h3M45 31h3M45 35h3" stroke="#f08c2e" strokeWidth="3" />
      </svg>
      <div className="ml-auto flex items-center gap-2 pt-3">
        <DateBox id="ngay-gui" label="Ngày gửi hóa đơn" value="23/01/2017" className="w-[99px]" active />
      </div>
    </div>
    <div className="flex justify-end gap-[5px] px-2 pb-2 pt-1">
      <button type="button" className="flex h-[23px] w-[75px] items-center gap-2 border border-[#79a0d0] bg-[#adc7e7] pl-[3px]">
        <svg width="16" height="16" viewBox="0 0 16 16" aria-hidden="true"><path d="M1 7.500l4.500 6L15 1.500 6 9.500z" fill="#7cc0f2" stroke="#1f6fc0" strokeWidth="1.200" /></svg>
        Đồng ý
      </button>
      <button type="button" className="flex h-[23px] w-[72px] items-center gap-2 border border-[#79a0d0] bg-[#adc7e7] pl-[3px]">
        <svg width="16" height="16" viewBox="0 0 16 16" aria-hidden="true"><circle cx="8" cy="8" r="7.300" fill="#e23b3b" stroke="#a31717" /><circle cx="8" cy="8" r="4" fill="none" stroke="#fff" strokeWidth="1.600" /><path d="M5 11l6-6" stroke="#fff" strokeWidth="1.600" /></svg>
        Hủy bỏ
      </button>
    </div>
  </div>
);

/* ── Step annotations drawn over both windows ── */

const bubbles = [
  'M778 292.500H789L771.500 256 827 292.500H895Q913.500 292.500 913.500 308V335Q913.500 349.500 895 349.500H778Q759.500 349.500 759.500 335V308Q759.500 292.500 778 292.500Z',
  'M235 631.500H419Q447 631.500 447 656V671L491 693 447 684.500Q444 704.500 416 704.500H237Q207 704.500 207 678V656Q207 631.500 235 631.500Z',
  'M925 609.500H1031Q1047 609.500 1047 625V651Q1047 667.500 1031 667.500H1022L1037.500 694 987 667.500H925Q909 667.500 909 651V625Q909 609.500 925 609.500Z',
  'M929 779.500H944L917 747 980 779.500H1048Q1060.500 779.500 1060.500 791V811Q1060.500 822.500 1048 822.500H929Q917.500 822.500 917.500 811V791Q917.500 779.500 929 779.500Z',
];

const Annotations = () => (
  <div className="pointer-events-none text-center text-[15px]">
    <svg width="1111" height="1100" viewBox="0 0 1111 1100" className="absolute left-0 top-0" aria-hidden="true">
      <g stroke="#c00000" strokeWidth="3" fill="#c00000">
        <path d="M684 700L748 669" />
        <path d="M759 664l-16 1 6 10z" strokeWidth="1" />
        <path d="M900.500 755L712 1043" />
        <path d="M705.500 1053l1-17 12 8z" strokeWidth="1" />
      </g>
      {bubbles.map((d) => (
        <path key={d} d={d} fill="#fff" stroke="#ec4a43" strokeWidth="3" className="drop-shadow-[2px_3px_2px_rgba(0,0,0,0.45)]" />
      ))}
    </svg>
    <p className="absolute left-[760px] top-[303px] w-[152px] leading-[18px]">1. Chọn hợp đồng<br />trên danh sách</p>
    <p className="absolute left-[207px] top-[648px] w-[236px] leading-[19px]">2. Nhấn chuột phải chọn <b>Cập<br />nhật ngày gửi hóa đơn</b></p>
    <p className="absolute left-[909px] top-[620px] w-[136px] leading-[18px]">3. Nhập ngày<br />gửi hóa đơn</p>
    <p className="absolute left-[918px] top-[790px] w-[138px] leading-[18px]">4. Nhấn <b>Đồng ý</b></p>
  </div>
);

const App = () => (
  <div className="relative bg-white font-['Liberation_Sans',sans-serif] text-[11px] text-black">
    <div className="relative mr-[61px]">
      <AppWindow id="truoc" list={contracts} time="5:39 CH" />
      <ContextMenu />
      <InvoiceDateDialog />
    </div>
    <AppWindow id="sau" list={invoices} time="5:49 CH" marked={3} className="-mt-3 ml-[61px]" />
    <Annotations />
  </div>
);

export default App;
